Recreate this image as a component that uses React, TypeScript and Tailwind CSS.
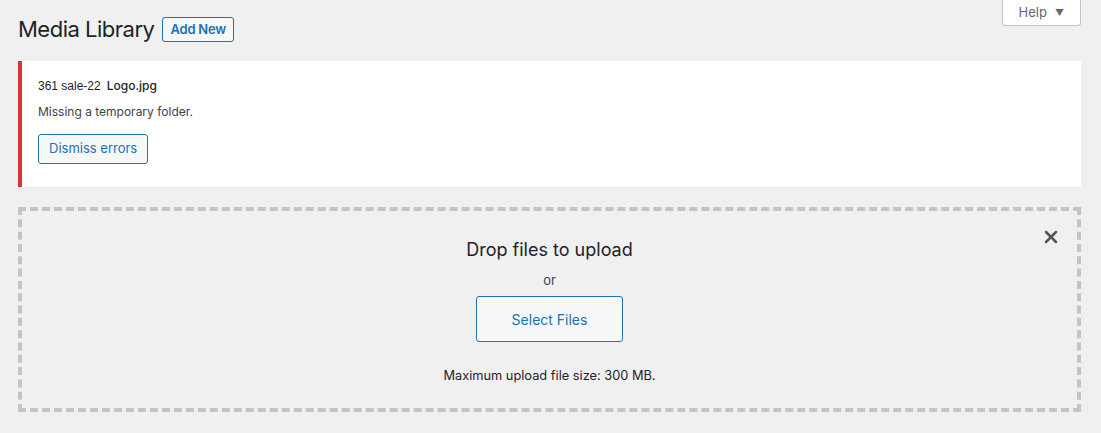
import { X } from 'lucide-react';

export default function App() {
  return (
    <div className="min-h-[433px] w-full bg-[#f0f0f1] text-[#1d2327]" style={{ fontFamily: 'Inter, "Noto Sans", sans-serif' }}>
      <div className="relative pb-5 pl-[18px] pr-[20px]">
        <button className="absolute right-[20px] top-0 flex h-[26px] items-center gap-[8px] rounded-b-[3px] border border-t-0 border-[#c3c4c7] bg-white px-[16px] text-[13px] text-[#646970]">
          Help
          <span className="text-[9px]">▼</span>
        </button>

        <div className="flex items-center gap-[8px] pt-[17px]">
          <h1 className="text-[22px] font-normal leading-[25px] tracking-[-0.5px]">Media Library</h1>
          <button className="h-[25px] rounded-[3px] border border-[#2271b1] bg-[#f6f7f7] px-[7px] text-[13px] font-semibold tracking-[-0.2px] text-[#2271b1]">
            Add New
          </button>
        </div>

        <div className="mt-[19px] border-l-4 border-[#d63638] bg-white pb-[23px] pl-[16px] pr-3 pt-[17px] shadow-[0_1px_1px_rgba(0,0,0,0.04)]">
          <div className="flex items-center gap-[6px] text-[12px] leading-[16px]">
            <span style={{ fontFamily: '"Liberation Sans", Arial, sans-serif' }}>361 sale-22</span>
            <span className="font-medium">Logo.jpg</span>
          </div>
          <p className="mt-[10px] text-[12px] leading-[16px] text-[#3c434a]">Missing a temporary folder.</p>
          <button className="mt-[14px] h-[30px] rounded-[3px] border border-[#2271b1] bg-[#f6f7f7] px-[10px] text-[13px] text-[#2271b1]">
            Dismiss errors
          </button>
        </div>

        <div className="relative mt-[20px] flex h-[205px] flex-col items-center border-4 border-dashed border-[#c3c4c7]">
          <button className="absolute right-[16px] top-[16px] text-[#50575e]">
            <X size={20} strokeWidth={3} />
          </button>
          <h2 className="mt-[27px] text-[18px] font-normal leading-[24px]">Drop files to upload</h2>
          <p className="mt-[10px] text-[13px] leading-[16px] text-[#3c434a]">or</p>
          <button className="mt-[8px] h-[46px] w-[147px] rounded-[3px] border border-[#2271b1] bg-[#f6f7f7] text-[14px] text-[#2271b1]">
            Select Files
          </button>
          <p className="mt-[26px] text-[12.8px] leading-[16px] text-[#1d2327]">Maximum upload file size: 300 MB.</p>
        </div>
      </div>
    </div>
  );
}
